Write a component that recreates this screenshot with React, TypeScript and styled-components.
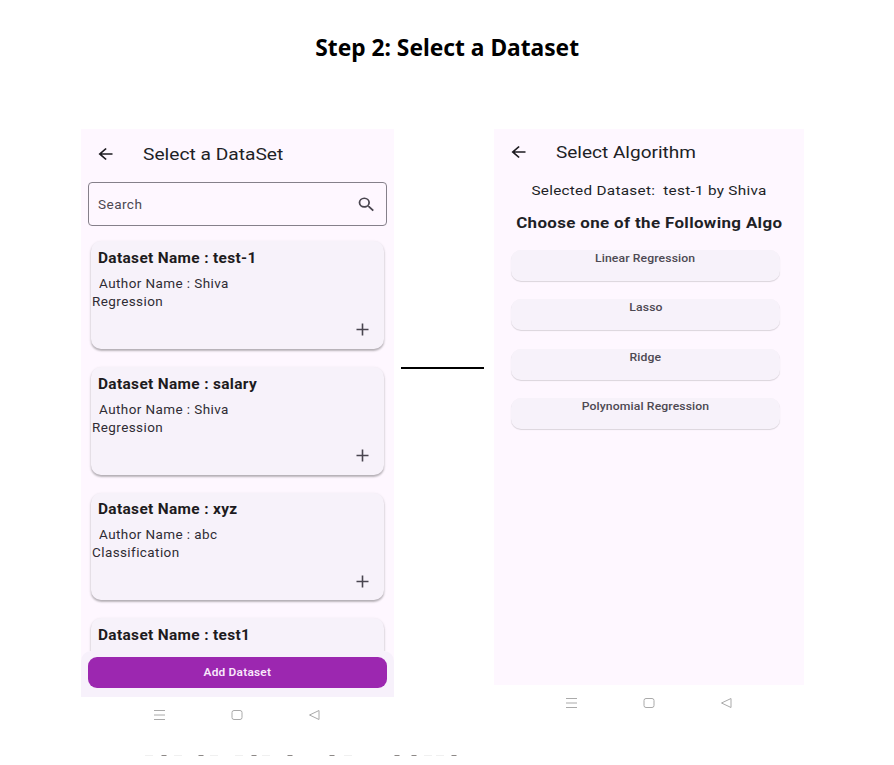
import React from "react";
import styled, { createGlobalStyle } from "styled-components";

const GlobalStyle = createGlobalStyle`
  * { box-sizing: border-box; }
  body { margin: 0; background: #fff; overflow: hidden; }
`;

const Page = styled.main`
  width: 894px;
  height: 765px;
  display: flex;
  flex-direction: column;
  background: #fff;
  font-family: Roboto, "Liberation Sans", sans-serif;
  color: #211f26;
  overflow: hidden;
`;

const Heading = styled.h1`
  margin: 0;
  height: 129px;
  padding-top: 31px;
  text-align: center;
  font: 700 24px/32px "Noto Sans", sans-serif;
  color: #000;
  white-space: nowrap;
  span { display: inline-block; transform: scaleX(0.948); }
`;

const Columns = styled.div`
  display: flex;
  align-items: flex-start;
  height: 625px;
  padding-left: 81px;
`;

const Column = styled.section<{ $width: number }>`
  width: ${(p) => p.$width}px;
  display: flex;
  flex-direction: column;
`;

const Screen = styled.div<{ $height: number }>`
  height: ${(p) => p.$height}px;
  display: flex;
  flex-direction: column;
  background: #fef7ff;
  overflow: hidden;
`;

const Connector = styled.div`
  width: 83px;
  height: 2px;
  margin: 238px 10px 0 7px;
  background: #000;
`;

const AppBar = styled.header<{ $height: number }>`
  height: ${(p) => p.$height}px;
  flex: none;
  display: flex;
  align-items: center;
  padding-left: 14px;
  gap: 27px;
  svg { display: block; }
`;

const Label = styled.span<{
  $size: number;
  $weight?: number;
  $track?: number;
  $stretch?: number;
  $origin?: string;
}>`
  display: inline-block;
  white-space: pre;
  font-size: ${(p) => p.$size}px;
  font-weight: ${(p) => p.$weight ?? 400};
  letter-spacing: ${(p) => p.$track ?? 0}px;
  transform: scaleX(${(p) => p.$stretch ?? 1.11});
  transform-origin: ${(p) => p.$origin ?? "left"} center;
`;

const SearchField = styled.div`
  height: 44px;
  flex: none;
  margin: 4px 7px 0;
  padding: 0 9.5px 0 9px;
  display: flex;
  align-items: center;
  justify-content: space-between;
  border: 1px solid #85808a;
  border-radius: 4px;
  color: #4c4852;
`;

const List = styled.div`
  flex: 1;
  min-height: 0;
  display: flex;
  flex-direction: column;
  gap: 18px;
  padding: 15.4px 10px 0;
  overflow: hidden;
`;

const Card = styled.article`
  height: 107.7px;
  flex: none;
  display: flex;
  flex-direction: column;
  padding: 0 0 0 1px;
  border-radius: 10px;
  background: #f7f2fa;
  box-shadow: 0 2px 2px rgba(0, 0, 0, 0.22), 0 1px 3px rgba(0, 0, 0, 0.13);
`;

const CardRow = styled.div<{ $height: number; $indent: number }>`
  height: ${(p) => p.$height}px;
  padding-left: ${(p) => p.$indent}px;
  display: flex;
  align-items: center;
  color: #2f2c34;
`;

const CardTitle = styled(CardRow)`
  color: #1d1b20;
`;

const CardAction = styled.div`
  flex: 1;
  display: flex;
  align-items: center;
  justify-content: flex-end;
  padding-right: 15px;
`;

const BottomBar = styled.footer`
  height: 46px;
  flex: none;
  padding: 6px 7px 0;
  background: #f7f1fb;
  border-radius: 10px 10px 0 0;
`;

const PrimaryButton = styled.button`
  display: flex;
  align-items: center;
  justify-content: center;
  width: 100%;
  height: 31px;
  padding: 0;
  border: 0;
  border-radius: 9px;
  background: #9c27b0;
  color: #f8e8fb;
  font-family: inherit;
`;

const NavBar = styled.nav<{ $shift?: number }>`
  height: 35px;
  display: flex;
  align-items: center;
  justify-content: center;
  padding-right: ${(p) => p.$shift ?? 0}px;
`;

const Line = styled.div<{ $height: number }>`
  height: ${(p) => p.$height}px;
  flex: none;
  display: flex;
  align-items: center;
  justify-content: center;
`;

const Options = styled.div`
  display: flex;
  flex-direction: column;
  gap: 18.4px;
  padding: 10px 24px 0 17px;
`;

const Option = styled.div`
  height: 31px;
  display: flex;
  justify-content: center;
  line-height: 17px;
  border-radius: 10px;
  background: #f7f2fa;
  color: #4d4952;
  box-shadow: 0 1px 1px rgba(0, 0, 0, 0.14), 0 0 1px rgba(0, 0, 0, 0.03);
`;

const Footnote = styled.svg`
  display: block;
  flex: none;
`;

const BackIcon = () => (
  <svg width="21" height="18" viewBox="0 0 24 24" preserveAspectRatio="none">
    <path d="M20 11H7.83l5.59-5.59L12 4l-8 8 8 8 1.41-1.41L7.83 13H20v-2z" fill="#1d1b20" />
  </svg>
);

const SearchIcon = () => (
  <svg width="21" height="19" viewBox="0 0 24 24" preserveAspectRatio="none">
    <path
      d="M15.5 14h-.79l-.28-.27A6.47 6.47 0 0 0 16 9.5 6.5 6.5 0 1 0 9.5 16c1.61 0 3.09-.59 4.23-1.57l.27.28v.79l5 4.99L20.49 19l-4.99-5zm-6 0a4.5 4.5 0 1 1 0-9 4.5 4.5 0 0 1 0 9z"
      fill="#49454f"
    />
  </svg>
);

const PlusIcon = () => (
  <svg width="13" height="13" viewBox="0 0 13 13">
    <path d="M6.5 .5v12M.5 6.5h12" stroke="#49454f" strokeWidth="1.6" />
  </svg>
);

const SystemIcons = () => (
  <svg width="168" height="14" viewBox="0 0 168 14" fill="none" stroke="#aaa" strokeWidth="1">
    <path d="M1 2.5h11M1 7h11M1 11.5h11" />
    <rect x="79" y="2.5" width="10" height="9" rx="2" />
    <path d="M166 2.5v9L156.5 7z" strokeLinejoin="round" />
  </svg>
);

const datasets = [
  { name: "test-1", author: "Shiva", kind: "Regression" },
  { name: "salary", author: "Shiva", kind: "Regression" },
  { name: "xyz", author: "abc", kind: "Classification" },
  { name: "test1" },
];

const algorithms = ["Linear Regression", "Lasso", "Ridge", "Polynomial Regression"];

const darkMarks = [164, 201, 254, 290, 332, 397, 414, 454];
const lightMarks = [149, 178, 214, 239, 266, 348, 428, 440];

export default function App() {
  return (
    <Page>
      <GlobalStyle />
      <Heading><span>Step 2: Select a Dataset</span></Heading>
      <Columns>
        <Column $width={313}>
          <Screen $height={568}>
            <AppBar $height={49}>
              <BackIcon />
              <Label $size={17.3}>Select a DataSet</Label>
            </AppBar>
            <SearchField>
              <Label $size={12.6} $track={0.39} $stretch={1.08}>Search</Label>
              <SearchIcon />
            </SearchField>
            <List>
              {datasets.map((d) => (
                <Card key={d.name}>
                  <CardTitle $height={33} $indent={6}>
                    <Label $size={14} $weight={700} $track={0.3} $stretch={1.103}>{`Dataset Name : ${d.name}`}</Label>
                  </CardTitle>
                  {d.author && (
                    <>
                      <CardRow $height={18} $indent={7}>
                        <Label $size={12.6} $track={0.39} $stretch={1.07}>{`Author Name : ${d.author}`}</Label>
                      </CardRow>
                      <CardRow $height={18} $indent={0}>
                        <Label $size={12.6} $track={0.39} $stretch={1.07}>{d.kind}</Label>
                      </CardRow>
                      <CardAction><PlusIcon /></CardAction>
                    </>
                  )}
                </Card>
              ))}
            </List>
            <BottomBar>
              <PrimaryButton>
                <Label $size={11} $weight={600} $track={0.2} $stretch={1.08} $origin="center">Add Dataset</Label>
              </PrimaryButton>
            </BottomBar>
          </Screen>
          <NavBar $shift={2}><SystemIcons /></NavBar>
        </Column>
        <Connector />
        <Column $width={310}>
          <Screen $height={556}>
            <AppBar $height={46}>
              <BackIcon />
              <Label $size={17.3} $stretch={1.1}>Select Algorithm</Label>
            </AppBar>
            <Line $height={30}>
              <Label $size={13.4} $track={0.25} $stretch={1.142} $origin="center">Selected Dataset:  test-1 by Shiva</Label>
            </Line>
            <Line $height={35}>
              <Label $size={14.8} $weight={700} $track={0.3} $stretch={1.145} $origin="center">Choose one of the Following Algo</Label>
            </Line>
            <Options>
              {algorithms.map((name) => (
                <Option key={name}>
                  <Label $size={11} $weight={500} $track={0.1} $origin="center">{name}</Label>
                </Option>
              ))}
            </Options>
          </Screen>
          <NavBar><SystemIcons /></NavBar>
        </Column>
      </Columns>
      <Footnote width="894" height="11" viewBox="0 754 894 11">
        {darkMarks.map((x) => (
          <path key={x} d={`M${x - 2.5} 755.5h5`} stroke="#8d8987" strokeWidth="1" />
        ))}
        {lightMarks.map((x) => (
          <path key={x} d={`M${x - 4} 755.5h8`} stroke="#f0f0f0" strokeWidth="1" />
        ))}
      </Footnote>
    </Page>
  );
}
